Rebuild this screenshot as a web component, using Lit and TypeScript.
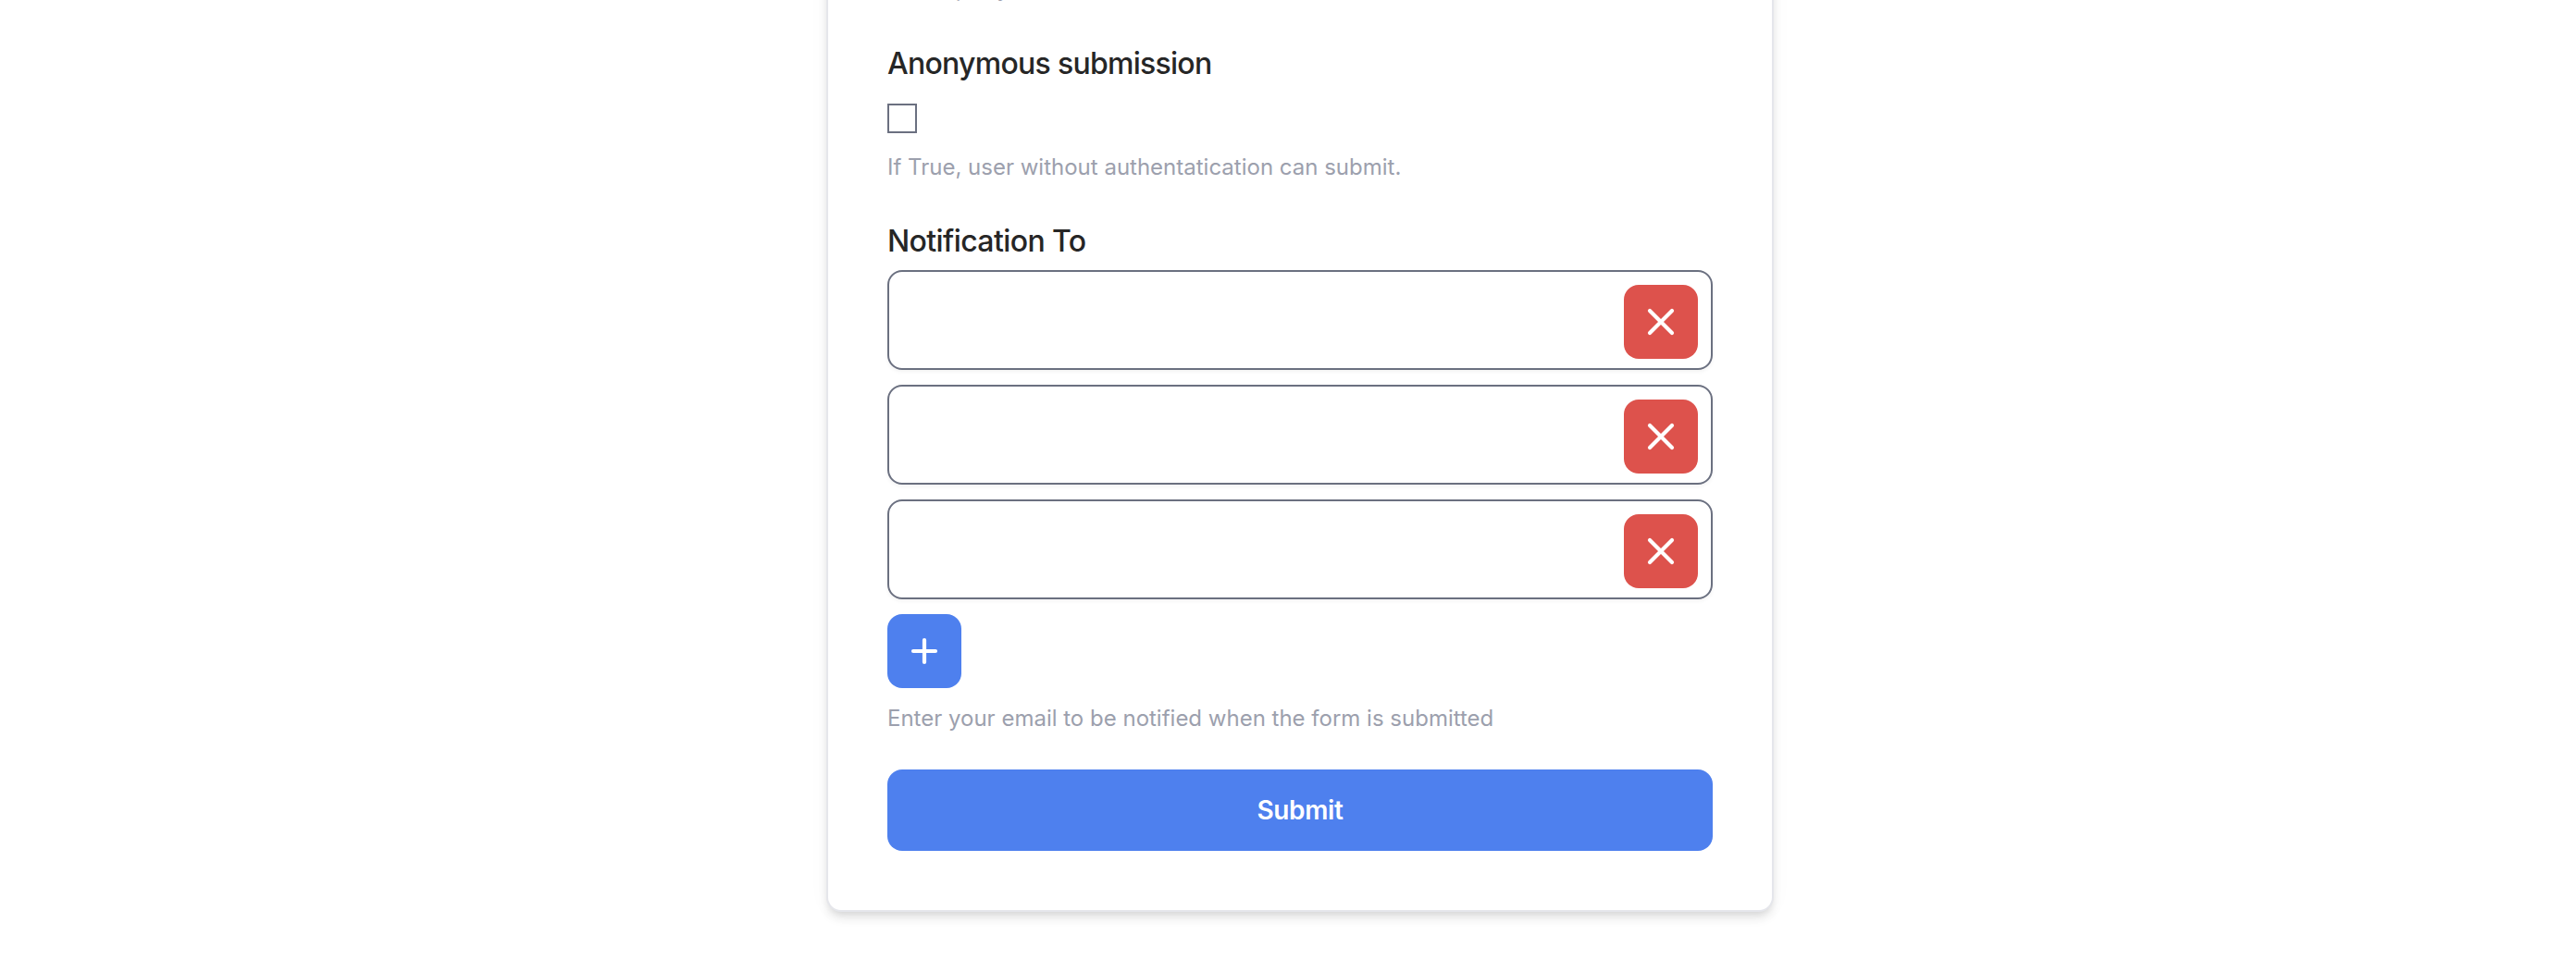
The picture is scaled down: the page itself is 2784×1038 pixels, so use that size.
import { LitElement, html, css } from "lit";
import { customElement, state } from "lit/decorators.js";

@customElement("app-root")
export class AppRoot extends LitElement {
  @state() private emails: string[] = ["", "", ""];

  static styles = css`
    :host {
      display: flex;
      justify-content: center;
      height: 1038px;
      padding-left: 26px;
      box-sizing: border-box;
      overflow: hidden;
      background: #fff;
      color: #262626;
      font-family: Inter, "Liberation Sans", sans-serif;
    }
    * { box-sizing: border-box; }
    .card {
      display: flex;
      flex-direction: column;
      width: 1024px;
      height: 1026px;
      margin-top: -40px;
      padding: 0 64px 64px;
      border: 2px solid #e5e6eb;
      border-top: 0;
      border-radius: 0 0 16px 16px;
      background: #fff;
      box-shadow: 0 8px 12px -2px rgba(0, 0, 0, 0.1), 0 4px 8px -4px rgba(0, 0, 0, 0.1), 0 0 24px rgba(0, 0, 0, 0.03);
    }
    .help {
      height: 32px;
      margin: 0;
      padding-top: 1px;
      color: #9ca0ad;
      font-size: 24px;
      line-height: 32px;
      white-space: nowrap;
    }
    .previous { height: 84px; padding-top: 11px; }
    .previous .help { letter-spacing: 0.8px; word-spacing: -6px; }
    .label {
      height: 48px;
      margin: 0;
      padding-top: 1px;
      font-size: 32px;
      font-weight: 500;
      line-height: 48px;
      letter-spacing: -0.73px;
      white-space: nowrap;
    }
    .notify { margin-top: 40px; letter-spacing: -0.6px; }
    .check {
      appearance: none;
      display: block;
      width: 32px;
      height: 32px;
      margin: 20px 0;
      border: 2px solid #6b7080;
      background: #fff;
    }
    .rows { display: flex; flex-direction: column; gap: 16px; margin-top: 8px; }
    .row {
      display: flex;
      height: 108px;
      padding: 14px;
      border: 2px solid #6b7080;
      border-radius: 16px;
      box-shadow: 0 2px 4px rgba(0, 0, 0, 0.05);
    }
    .field { flex: 1; min-width: 0; border: 0; outline: 0; background: transparent; font: inherit; font-size: 28px; }
    .button {
      display: flex;
      flex: none;
      align-items: center;
      justify-content: center;
      width: 80px;
      height: 80px;
      margin: 0;
      padding: 0;
      border: 0;
      border-radius: 16px;
      color: #fff;
    }
    .remove { background: #dd524c; }
    .add { background: #4e80ee; }
    .icon { display: block; width: 40px; height: 40px; }
    .foot { margin-top: 16px; }
    .submit {
      height: 88px;
      margin-top: 40px;
      padding: 0;
      border: 0;
      border-radius: 16px;
      background: #4e80ee;
      color: #fff;
      font: 600 28px/40px Inter, "Liberation Sans", sans-serif;
      letter-spacing: -0.4px;
    }
  `;

  private icon(d: string) {
    return html`<svg class="icon" viewBox="0 0 40 40" fill="none" stroke="currentColor" stroke-width="4.2" stroke-linecap="round"><path d=${d}></path></svg>`;
  }

  private remove(index: number) {
    this.emails = this.emails.filter((_, i) => i !== index);
  }

  render() {
    return html`
      <form class="card" @submit=${(e: Event) => e.preventDefault()}>
        <div class="previous"><p class="help">Is company</p></div>
        <p class="label">Anonymous submission</p>
        <input class="check" type="checkbox" />
        <p class="help">If True, user without authentatication can submit.</p>
        <p class="label notify">Notification To</p>
        <div class="rows">
          ${this.emails.map((email, i) => html`
            <div class="row">
              <input class="field" type="email" .value=${email} />
              <button class="button remove" type="button" @click=${() => this.remove(i)}>
                ${this.icon("M8 8L32 32M32 8L8 32")}
              </button>
            </div>`)}
          <button class="button add" type="button" @click=${() => (this.emails = [...this.emails, ""])}>
            ${this.icon("M20 8V32M8 20H32")}
          </button>
        </div>
        <p class="help foot">Enter your email to be notified when the form is submitted</p>
        <button class="submit" type="submit">Submit</button>
      </form>
    `;
  }
}
